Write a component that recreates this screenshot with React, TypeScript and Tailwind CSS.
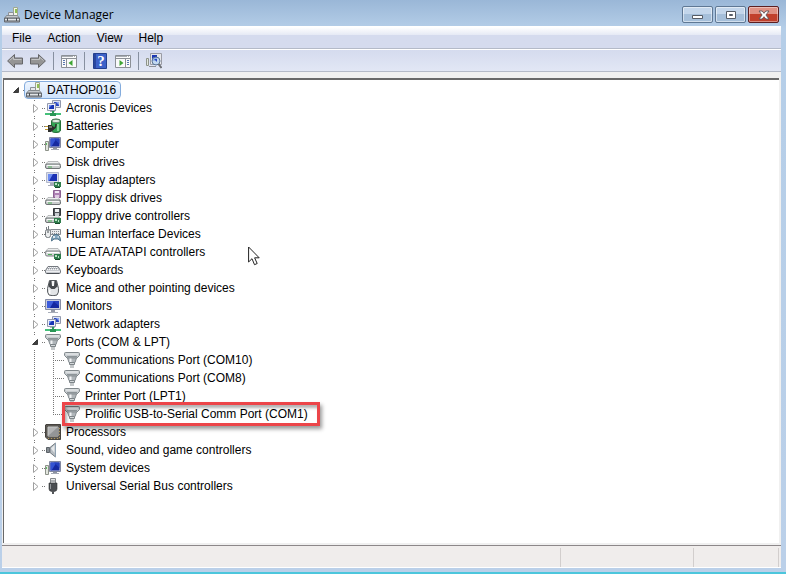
import { useState } from 'react';
import type { ReactNode } from 'react';

type IconName =
  | 'pc' | 'network' | 'battery' | 'computer' | 'disk' | 'display' | 'floppy' | 'floppyCtl' | 'hid'
  | 'ide' | 'keyboard' | 'mouse' | 'monitor' | 'port' | 'cpu' | 'sound' | 'usb';

type Device = { label: string; icon: IconName; marked?: boolean; children?: Device[] };

const DEVICES: Device[] = [
  { label: 'Acronis Devices', icon: 'network' },
  { label: 'Batteries', icon: 'battery' },
  { label: 'Computer', icon: 'computer' },
  { label: 'Disk drives', icon: 'disk' },
  { label: 'Display adapters', icon: 'display' },
  { label: 'Floppy disk drives', icon: 'floppy' },
  { label: 'Floppy drive controllers', icon: 'floppyCtl' },
  { label: 'Human Interface Devices', icon: 'hid' },
  { label: 'IDE ATA/ATAPI controllers', icon: 'ide' },
  { label: 'Keyboards', icon: 'keyboard' },
  { label: 'Mice and other pointing devices', icon: 'mouse' },
  { label: 'Monitors', icon: 'monitor' },
  { label: 'Network adapters', icon: 'network' },
  {
    label: 'Ports (COM & LPT)',
    icon: 'port',
    children: [
      { label: 'Communications Port (COM10)', icon: 'port' },
      { label: 'Communications Port (COM8)', icon: 'port' },
      { label: 'Printer Port (LPT1)', icon: 'port' },
      { label: 'Prolific USB-to-Serial Comm Port (COM1)', icon: 'port', marked: true },
    ],
  },
  { label: 'Processors', icon: 'cpu' },
  { label: 'Sound, video and game controllers', icon: 'sound' },
  { label: 'System devices', icon: 'computer' },
  { label: 'Universal Serial Bus controllers', icon: 'usb' },
];

const MENUS = ['File', 'Action', 'View', 'Help'];

const drive = (
  <>
    <path d="M3 7.5h10l2.5 3H.5z" fill="#eceeee" stroke="#a0a4a6" strokeWidth=".7" />
    <rect x=".5" y="10" width="15" height="4.5" rx="1.5" fill="#c9cccd" stroke="#6f7476" />
    <path d="M2 11.5h12" stroke="#f7f8f8" />
    <path d="M3 13h4" stroke="#4fae58" />
  </>
);

const card = (
  <>
    <rect x="9" y="10" width="7" height="5" fill="#2f7d4c" />
    <path d="M10 11h2v2h-2zM13 12h1v2h-1z" fill="#b9e3c4" />
    <path d="M10 15.5h5" stroke="#174a2b" />
  </>
);

const ICONS: Record<IconName, ReactNode> = {
  pc: (
    <>
      <path d="M9.5.5h4v8h-4z" fill="#f4f6e8" stroke="#a0a890" />
      <path d="M11 2h2v4h-2z" fill="#8fbf52" />
      <path d="M4.5 5.500h5v3h-5z" fill="#e6e8ea" stroke="#8d9297" />
      <path d="M2.5 8.5h11l2 3H.5z" fill="#c4c8cc" stroke="#7b8085" strokeWidth=".8" />
      <path d="M.5 11h15v4H.5z" fill="#9ba0a5" stroke="#62676c" />
      <path d="M1 12.5h14" stroke="#e2e5e8" />
      <path d="M3.5 11v3M12.5 11v3" stroke="#4c5155" />
    </>
  ),
  network: (
    <>
      <path d="M7.5.5h8v7h-8z" fill="#dfe4f2" stroke="#9299ad" />
      <path d="M9 2h5v4H9z" fill="#2c49c4" />
      <path d="M11 2h3v3z" fill="#8ba6f2" />
      <path d="M2.5 3.5h8v7h-8z" fill="#eef0f8" stroke="#9299ad" />
      <path d="M4 5h5v4H4z" fill="#1734b5" />
      <path d="M4 5h3L4 8z" fill="#6f8fee" />
      <path d="M5 11h5v1H5z" fill="#aeb3bd" />
      <path d="M8 11v3" stroke="#2d9b5a" strokeWidth="2" />
      <path d="M0 14h16" stroke="#45c07a" strokeWidth="2" />
      <path d="M5 13h6v3H5z" fill="#2a9656" />
    </>
  ),
  battery: (
    <>
      <path d="M6.5 3q0-2 4.500-2t4.500 2v9q0 2.500-4.500 2.500t-4.500-2.500z" fill="#33a352" stroke="#267039" />
      <ellipse cx="11" cy="3" rx="4" ry="1.6" fill="#e2efe3" stroke="#63776a" strokeWidth=".7" />
      <path d="M13 6v7" stroke="#9be3ab" strokeWidth="1.5" />
      <path d="M0 8.5h4M0 11.5h4" stroke="#c09b35" />
      <path d="M3 7h3l3 2v2.5L6 14H3z" fill="#2e2f2c" />
      <path d="M4 9h3" stroke="#b4b6ae" />
      <path d="M8 10.500q3 0 3-4.500" fill="none" stroke="#2e2f2c" strokeWidth="1.5" />
    </>
  ),
  computer: (
    <>
      <path d="M.5 5.5h3v9h-3z" fill="#e3e6df" stroke="#8d9289" />
      <path d="M1.5 7v2" stroke="#5ebb63" />
      <path d="M4.5 1.5h11v10h-11z" fill="#c8ccde" stroke="#8288a0" />
      <path d="M5.5 2.500h9v8h-9z" fill="#1529a0" />
      <path d="M5.5 2.500h6l-5 8h-1z" fill="#3353d2" />
      <path d="M9 2.500h5.500V8z" fill="#2440be" />
      <path d="M8 12h4v1H8z" fill="#8e94a2" />
      <path d="M6 13.5h8" stroke="#a3a8b4" />
    </>
  ),
  disk: drive,
  display: (
    <>
      <path d="M1.5.5h12v10h-12z" fill="#d9ddeb" stroke="#b1b7cb" />
      <path d="M3 2h9v7H3z" fill="#1b31b4" />
      <path d="M3 2h5L4 9H3z" fill="#6c8cf1" />
      <path d="M5 11h4v2H5zM3 13h7v1H3z" fill="#a6abb8" />
      {card}
    </>
  ),
  floppy: (
    <>
      {drive}
      <path d="M8.5.5h7v7h-7z" fill="#ad7fb3" stroke="#8b6192" />
      <path d="M10 1h4v2h-4z" fill="#f0e3f2" />
      <path d="M10 5h4v3h-4z" fill="#dec9e1" />
    </>
  ),
  floppyCtl: (
    <>
      {drive}
      <path d="M8.5.5h7v7h-7z" fill="#50545a" stroke="#33363a" />
      <path d="M10 1h4v3h-4z" fill="#eef0f1" />
      <path d="M10 5h4v3h-4z" fill="#c9cdd1" />
      {card}
    </>
  ),
  hid: (
    <>
      <path d="M1.5 4V1M3.5 4V0" stroke="#777d82" />
      <rect x=".5" y="3.5" width="5" height="8" rx="2" fill="#eceeef" stroke="#70767a" />
      <path d="M3 4v3" stroke="#4b5054" />
      <path d="M5.500 3.5h10v5h-10z" fill="#e8eaec" stroke="#868b91" />
      <path d="M7 5.5h8M7 7.5h8" stroke="#888e95" strokeDasharray="1 1" />
      <path d="M6.5 15q0-6.500 4.500-6.500t4.500 6.500l-2.500-2H9z" fill="#82a6bf" stroke="#4e7289" />
      <path d="M9 10v2M8 11h2M12.5 11h1.500" stroke="#fff" />
    </>
  ),
  ide: (
    <>
      <path d="M3 4.5h10l2.500 3H.5z" fill="#eceeee" stroke="#a0a4a6" strokeWidth=".7" />
      <rect x=".5" y="7" width="15" height="5" rx="1.5" fill="#d5d8d9" stroke="#7b8082" />
      <path d="M2 8.5h12" stroke="#fff" />
      <path d="M3 10.5h4" stroke="#4fae58" />
      {card}
    </>
  ),
  keyboard: (
    <>
      <path d="M3 4.5h10l2.500 4v2q0 1-1.500 1H2q-1.500 0-1.500-1v-2z" fill="#c8cbd0" stroke="#74797f" />
      <path d="M3 5.5h10M2 7.5h12" stroke="#f8f8f9" strokeDasharray="1 1" />
      <path d="M3 6.5h10" stroke="#8f949b" strokeDasharray="1 1" />
      <path d="M1 9.5h14" stroke="#eeeff1" />
      <path d="M2 11.5h12" stroke="#4d5156" />
    </>
  ),
  mouse: (
    <>
      <path d="M4.500.5h7l2 8q.5 4-1.500 6.500-4 1.500-8 0Q2 12.500 2.500 8.500z" fill="#e3e5e7" stroke="#55595d" />
      <path d="M4.500 1h2l.5 5h2l.5-5h2l1 5.500L9.500 9h-3l-3-2.500z" fill="#46494d" />
      <path d="M8 1v5" stroke="#f6f6f6" strokeWidth="2" />
      <path d="M5 10q-1 2 0 4" fill="none" stroke="#fff" strokeWidth="1.5" />
    </>
  ),
  monitor: (
    <>
      <path d="M.5 1.5h15v10H.5z" fill="#c9cddd" stroke="#868da6" />
      <path d="M2 3h12v7H2z" fill="#1527a0" />
      <path d="M2 3h7l-4 7H2z" fill="#3c5bdc" />
      <path d="M8 3h6v5z" fill="#2740c0" />
      <path d="M6 12h4v2H6z" fill="#969ba8" />
      <path d="M3 14.5h10" stroke="#a9aeb9" />
    </>
  ),
  port: (
    <>
      <path d="M.5 1.5q0-1 1-1h13q1 0 1 1v2L13 6H3L.5 3.500z" fill="#c6cbce" stroke="#81888c" />
      <path d="M2 2h12" stroke="#eef0f1" />
      <path d="M3 4.500h10" stroke="#8d9498" />
      <path d="M3.500 6h9l-1.500 4.500H5z" fill="#b0b6ba" stroke="#858c90" />
      <path d="M6.500 6.500v3.500" stroke="#f1f3f4" strokeWidth="2" />
      <path d="M5.500 10.5h5v2h-5z" fill="#d4d8da" stroke="#7d8488" />
      <path d="M7 13v3M9 13v3" stroke="#8a9195" />
    </>
  ),
  cpu: (
    <>
      <path d="M1 .5h14.500v15H3L.5 13V1z" fill="#5b5853" stroke="#45423e" />
      <path d="M3 3h10v9H3z" fill="#b3b4b5" stroke="#c9caca" />
      <path d="M3 12 13 3v9z" fill="#939597" />
      <path d="M3 14.5h12M14.500 4v11" stroke="#b39a5c" strokeDasharray="1 2" />
    </>
  ),
  sound: (
    <>
      <path d="M1.5 5.5h3v5h-3z" fill="#858c92" stroke="#5b6166" />
      <path d="M5 5.5 10.5 1v14L5 10.500z" fill="#b7bdc2" stroke="#747b81" />
      <path d="M6 6.5 9.500 3v8z" fill="#e6e9eb" />
      <path d="M10.5 1v14" stroke="#8fa1b0" />
    </>
  ),
  usb: (
    <>
      <path d="M5.5.5h5v5h-5z" fill="#e6e7e8" stroke="#85898c" />
      <path d="M7 2v2M9 2v2" stroke="#777b7e" />
      <path d="M4 5h8v6q0 2-2.500 2.500h-3Q4 13 4 11z" fill="#4b4e52" stroke="#333538" strokeWidth=".6" />
      <path d="M5.5 6v5" stroke="#94989c" />
      <path d="M8 13v3" stroke="#54575a" strokeWidth="2" />
    </>
  ),
};

function DeviceIcon({ name }: { name: IconName }) {
  return (
    <svg aria-hidden="true" viewBox="0 0 16 16" className="size-4 shrink-0">
      {ICONS[name]}
    </svg>
  );
}

type BranchProps = { state?: 'open' | 'closed'; down?: boolean };

// Dotted guide lines of one tree cell, with the expander triangle on top
function Branch({ state, down = true }: BranchProps) {
  return (
    <svg aria-hidden="true" viewBox="0 0 17 18" className="block h-[18px] w-[17px] shrink-0">
      <g stroke="#777" strokeDasharray="1 1">
        <path d={state ? 'M6.5 1v1' : 'M6.5 1v9'} />
        {down && <path d={state ? 'M6.5 17v1' : 'M6.5 9v9'} />}
        <path d={state ? 'M14 9.5h3' : 'M6 9.5h11'} />
      </g>
      {state === 'open' && <path d="M9.5 6.5v5h-5z" fill="#404040" stroke="#222" strokeWidth=".8" />}
      {state === 'closed' && <path d="m5.5 5.500 4.500 4-4.500 4z" fill="#fff" stroke="#a0a0a0" />}
    </svg>
  );
}

function PortRow({ device, last }: { device: Device; last: boolean }) {
  return (
    <li className="flex h-[18px] items-center">
      <svg aria-hidden="true" viewBox="0 0 19 18" className="h-[18px] w-[19px] shrink-0">
        <path d="M6.5 1v17" stroke="#777" strokeDasharray="1 1" />
      </svg>
      <Branch down={!last} />
      <div className="relative flex items-center gap-[5px]">
        <DeviceIcon name={device.icon} />
        <span>{device.label}</span>
        {device.marked && (
          <span className="pointer-events-none absolute -top-[3px] -right-3 -bottom-[3px] -left-0.5 border-3 border-[#ec4549] shadow-[2px_3px_4px_rgba(0,0,0,0.4),inset_2px_3px_3px_rgba(0,0,0,0.3)]" />
        )}
      </div>
    </li>
  );
}

function DeviceRow({ device, last }: { device: Device; last: boolean }) {
  const [open, setOpen] = useState(Boolean(device.children));
  const expanded = open && Boolean(device.children);
  return (
    <li>
      <div className="flex h-[18px] items-center">
        <button type="button" aria-expanded={expanded} aria-label={`Toggle ${device.label}`} onClick={() => setOpen(!open)}>
          <Branch state={expanded ? 'open' : 'closed'} down={!last} />
        </button>
        <DeviceIcon name={device.icon} />
        <span className="pl-[5px]">{device.label}</span>
      </div>
      {expanded && (
        <ul>
          {device.children!.map((child, i) => (
            <PortRow key={child.label} device={child} last={i === device.children!.length - 1} />
          ))}
        </ul>
      )}
    </li>
  );
}

function ToolButton({ label, children }: { label: string; children: ReactNode }) {
  return (
    <button type="button" aria-label={label} className="flex size-4 items-center justify-center">
      <svg aria-hidden="true" viewBox="0 0 16 16" className="size-4">{children}</svg>
    </button>
  );
}

function Separator() {
  return <span className="h-[18px] w-px bg-[#8790a0]" />;
}

const arrow = (
  <>
    <path d="M.6 8 7.5 1.500v3.500h8v6h-8v3.500z" fill="#959595" stroke="#66676a" />
    <path d="M2.500 7.500 6.500 4v2.500h8" fill="none" stroke="#c3c4c5" />
  </>
);

const pane = (
  <>
    <path d="M.5 2.500h15v12H.5z" fill="#fafafa" stroke="#8c9096" />
    <path d="M1 3.500h14" stroke="#a9adb3" />
    <path d="M1 5.500h14" stroke="#8c9096" />
    <path d="M12 3.500h3" stroke="#fff" strokeDasharray="1 1" />
  </>
);

export default function App() {
  return (
    <div className="flex h-screen flex-col border-b-2 border-[#4cc6dc] bg-linear-to-b from-[#9ab7d7] via-[#b5cee8] via-5% to-[#bbd0e9] font-['Liberation_Sans',Arial,sans-serif] text-[12px] leading-[18px] text-black">
      <header className="flex h-[26px] shrink-0 items-center justify-between pr-[7px] pl-1">
        <div className="flex items-center gap-1 pt-1">
          <DeviceIcon name="pc" />
          <h1 className="font-['Open_Sans','Noto_Sans',sans-serif] text-[12px] leading-[18px]">Device Manager</h1>
        </div>
        <div className="flex gap-0.5 pt-[3px]">
          <button type="button" aria-label="Minimize" className="flex h-[17px] w-[31px] items-center justify-center rounded-xs border border-[#5f7894] bg-linear-to-b from-[#c3d6eb] from-50% to-[#a5bfda] to-50% inset-ring inset-ring-white/50">
            <svg viewBox="0 0 12 12" className="size-3"><path d="M.5 6.500h10v3H.5z" fill="#fff" stroke="#555c66" /></svg>
          </button>
          <button type="button" aria-label="Maximize" className="flex h-[17px] w-[31px] items-center justify-center rounded-xs border border-[#5f7894] bg-linear-to-b from-[#c3d6eb] from-50% to-[#a5bfda] to-50% inset-ring inset-ring-white/50">
            <svg viewBox="0 0 12 12" className="size-3"><path d="M1.500 2.500h9v7h-9z" fill="#fff" stroke="#555c66" /><path d="M4.500 5.500h3v1h-3z" fill="#a9bfd8" stroke="#555c66" /></svg>
          </button>
          <button type="button" aria-label="Close" className="flex h-[17px] w-[31px] items-center justify-center rounded-xs border border-[#5c1f21] bg-linear-to-b from-[#df9184] from-50% to-[#c1402c] to-50% inset-ring inset-ring-white/40">
            <svg viewBox="0 0 12 12" className="size-3">
              <path d="M1 2h3.200L6 4.300 7.800 2H11L7.900 6l3.100 4H7.800L6 7.700 4.200 10H1l3.100-4z" fill="#fff" stroke="#5d5358" strokeWidth=".9" />
            </svg>
          </button>
        </div>
      </header>

      <div className="mr-[5px] mb-1 ml-0.5 flex min-h-0 flex-1 flex-col bg-[#f0f0f0]">
        <nav className="flex h-[23px] shrink-0 items-center border-b border-[#b4bac8] bg-linear-to-b from-white from-5% via-[#e6eaf5] via-40% to-[#d5dbee] to-40% px-0.5 pt-px">
          {MENUS.map((menu) => (
            <button key={menu} type="button" className="px-2">{menu}</button>
          ))}
        </nav>

        <div className="flex h-[23px] shrink-0 items-center gap-[7px] border-t border-b border-t-white border-b-[#b4bac8] bg-linear-to-b from-[#d5dbee] to-[#e2e7f5] px-[5px]">
          <ToolButton label="Back">{arrow}</ToolButton>
          <ToolButton label="Forward">
            <g transform="matrix(-1 0 0 1 16 0)">{arrow}</g>
          </ToolButton>
          <Separator />
          <ToolButton label="Show console tree">
            {pane}
            <path d="M5.500 6v8" stroke="#8c9096" />
            <path d="M2 7.500h2M2 9.500h2M2 11.500h2" stroke="#5977b0" />
            <path d="M11.500 7v6L7.500 10z" fill="#3fa535" />
          </ToolButton>
          <Separator />
          <ToolButton label="Help">
            <path d="M1.500.5h13v15h-13z" fill="#3d62c9" stroke="#24408f" />
            <path d="M2 1h2v14H2z" fill="#2a479f" />
            <text x="9" y="13" textAnchor="middle" fill="#fff" className="font-['Liberation_Serif',serif] text-[15px] font-bold">?</text>
          </ToolButton>
          <ToolButton label="Show action pane">
            {pane}
            <path d="M10.500 6v8" stroke="#8c9096" />
            <path d="M12 7.500h2M12 9.500h2M12 11.500h2" stroke="#5977b0" />
            <path d="M4.500 7v6L8.500 10z" fill="#3fa535" />
          </ToolButton>
          <Separator />
          <ToolButton label="Scan for hardware changes">
            <path d="M.5 5.500h2v7h-2z" fill="#e3e6df" stroke="#8d9289" />
            <path d="M4.500.5h11v11h-11z" fill="#e5e6ea" stroke="#9a9ca5" />
            <path d="M6 2h5v6H6z" fill="#1c37b4" />
            <path d="M3 13.500h7" stroke="#8e9197" />
            <circle cx="10" cy="8" r="4" fill="#b8d4f1" fillOpacity=".8" stroke="#5b7598" />
            <path d="M8 6h3v3z" fill="#2c49c4" />
            <path d="m12.500 11 3 4" stroke="#6d7075" strokeWidth="2" />
          </ToolButton>
        </div>

        <main className="relative mt-1.5 mr-0.5 ml-px flex-1 overflow-auto border-t-2 border-l border-t-[#696969] border-l-[#696969] bg-white pt-px">
          <div className="flex h-[18px] items-center pl-[5px]">
            <button type="button" aria-expanded="true" aria-label="Toggle DATHOP016">
              <svg aria-hidden="true" viewBox="0 0 17 18" className="block h-[18px] w-[17px]">
                <path d="M9.5 6.5v5h-5z" fill="#404040" stroke="#222" strokeWidth=".8" />
                <path d="M14 9.5h3" stroke="#777" strokeDasharray="1 1" />
              </svg>
            </button>
            <div className="-ml-0.5 flex h-[18px] items-center gap-[5px] rounded-sm border border-[#84acdd] bg-linear-to-b from-[#eef5fe] to-[#cfe3fb] pr-1 pl-px">
              <DeviceIcon name="pc" />
              <span>DATHOP016</span>
            </div>
          </div>
          <ul className="pl-6">
            {DEVICES.map((device, i) => (
              <DeviceRow key={device.label} device={device} last={i === DEVICES.length - 1} />
            ))}
          </ul>

          <svg aria-hidden="true" viewBox="0 0 12 20" className="pointer-events-none absolute top-[166px] left-[244px] h-5 w-3">
            <path d="M.6 1v15l3.400-3.300 2.500 6 2.700-1.200-2.600-5.700h4.600z" fill="#fff" stroke="#222" />
          </svg>
        </main>

        <footer className="mt-0.5 flex h-[23px] shrink-0 border-t border-b border-t-[#8c8789] border-b-white bg-[#f0edec] pt-0.5">
          <span className="flex-1 border-r border-[#d2cecd]" />
          <span className="w-[133px] border-r border-[#d2cecd]" />
          <span className="mr-0.5 w-[85px] border-r border-[#d2cecd]" />
        </footer>
      </div>
    </div>
  );
}
